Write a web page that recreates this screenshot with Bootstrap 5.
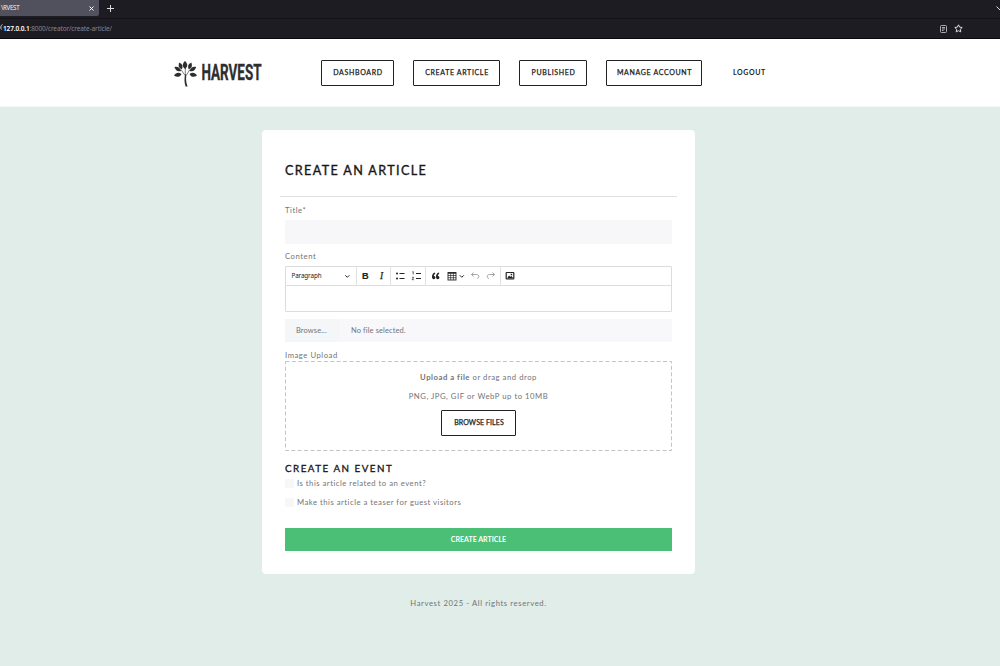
<!DOCTYPE html>
<html lang="en">
<head>
<meta charset="utf-8">
<meta name="viewport" content="width=device-width, initial-scale=1">
<title>Harvest</title>
<link rel="stylesheet" href="https://cdn.jsdelivr.net/npm/bootstrap@5.3.0/dist/css/bootstrap.min.css">
<style>
body{font-family:Lato,"Open Sans",sans-serif;background:#e1ede9;color:#727477;font-size:7.7px;line-height:12px;letter-spacing:.54px;height:666px;overflow:hidden}
svg{display:block;flex:none}
.chrome{font-family:"Noto Sans",sans-serif;letter-spacing:0;background:#1d1c23;height:39px;border-bottom:1px solid #09090c}
.tabs{height:18px}
.tab-on{width:99px;height:16px;background:#50515c;color:#f2f2f4;font-size:6.2px;letter-spacing:-.3px;padding:0 5px 0 1px;border-radius:0 0 2px 0}
.url{height:20px;font-size:6.5px;color:#85858c;padding-left:3px;border-top:1px solid #141319}
.url b{color:#fff;font-weight:600}
.url-text{letter-spacing:-.12px}
.url-icons{margin-right:37px;gap:7px}
.site-head{height:68px;background:#fff;padding-left:173px;border-bottom:1px solid #f4f8f7}
.brand{width:148px;padding-top:20px}
.site-nav{gap:19px;padding-top:21px}
.btn-line{border:1.5px solid #222;border-radius:1px;background:#fff;color:#222;font-weight:400;-webkit-text-stroke:.25px #222;font-size:7px;line-height:11px;height:26px;padding:0 0 1px 1px;display:flex;align-items:center;justify-content:center;letter-spacing:.66px}
.logout{color:#222;font-weight:700;font-size:7px;letter-spacing:.6px;margin-left:12px;height:24px;line-height:24px}
.panel{width:433px;height:444px;margin:23px 0 0 262px;border-radius:4px;padding:34px 23px 0;background:#fff}
h1{font-size:12.6px;line-height:14px;font-weight:400;-webkit-text-stroke:.35px #171717;color:#171717;letter-spacing:1.37px;margin:0 0 18px}
.rule{height:1px;background:#dedfdf;margin:0 -5px 7px}
.lab{height:12px}
.field{height:24px;background:#f7f7f9;border-radius:1px}
.editor{border:1px solid #dcdcdc;height:46px;border-radius:1px;margin-top:4px}
.tools{height:19px;border-bottom:1px solid #dedede;color:#222;font-family:"Noto Sans",sans-serif;font-size:6px;letter-spacing:-.02px}
.file{height:23px;background:#f8f8fa;margin-top:7px;letter-spacing:.1px;font-size:7.5px}
.file-btn{width:55px;padding-left:11px;background:#f5f6f7;height:23px;line-height:23px}
.drop-frame{height:90px}
.drop-copy{padding-top:10px}
.check-box{width:9px;height:9px;background:#f7f7f8;border-radius:1px;margin-right:3px}
h2{font-size:9.8px;line-height:12px;font-weight:400;-webkit-text-stroke:.3px #171717;color:#171717;letter-spacing:1.5px;margin:11px 0 3px}
.checks{letter-spacing:.5px}
.submit{height:23px;background:#4abf75;color:#fff;border:0;font-size:7px;font-weight:700;letter-spacing:.02px;line-height:23px;padding:0;border-radius:0;margin-top:20px;width:100%}
footer{width:433px;margin:23px 0 0 262px;letter-spacing:.6px}
</style>
</head>
<body>
<div class="chrome">
  <div class="tabs d-flex align-items-start">
    <div class="tab-on d-flex align-items-center justify-content-between"><span>\RVEST</span><svg width="5" height="5" viewBox="0 0 5 5" stroke="#fff"><path d="M.5.5l4 4m0-4l-4 4"/></svg></div>
    <svg class="ms-2" style="margin-top:5px" width="7" height="7" viewBox="0 0 7 7" stroke="#ddd"><path d="M3.500 0v7M0 3.500h7"/></svg>
    <svg class="ms-auto" style="margin-top:6px" width="4" height="5" viewBox="0 0 4 5" fill="none" stroke="#ddd"><path d="M.5.5L4 4"/></svg>
  </div>
  <div class="url position-relative d-flex align-items-center justify-content-between">
    <svg class="position-absolute start-0" style="top:5px" width="3" height="7" viewBox="0 0 3 7" fill="none" stroke="#ccc"><path d="M2.500.5C.5 1.500.3 4 1.500 5.500"/></svg>
    <span class="url-text"><b>127.0.0.1</b>:8000/creator/create-article/</span>
    <span class="url-icons d-flex align-items-center">
      <svg width="7" height="8" viewBox="0 0 7 8" fill="none" stroke="#bbb" stroke-width=".9"><rect x=".5" y=".5" width="6" height="7" rx="1"/><path d="M2 2.500h3M2 4h3M2 5.500h1.500"/></svg>
      <svg width="9" height="9" viewBox="0 0 9 9" fill="none" stroke="#ddd" stroke-linejoin="round"><path d="M4.500.8l1.100 2.300 2.600.4-1.900 1.800.5 2.600-2.300-1.200-2.300 1.200.5-2.600L.8 3.500l2.600-.4z"/></svg>
    </span>
  </div>
</div>
<header class="site-head d-flex">
  <div class="brand">
    <svg width="94" height="30" viewBox="0 0 94 30" fill="#2e2e2e">
      <g>
        <path d="M12 2c3 3 3 5.500 0 8-3-2.500-3-5 0-8z"/>
        <path d="M6.300 3.500c3.300 1.700 3.800 3.700 2.600 6.800-3.200-1-3.900-3.400-2.600-6.800z"/>
        <path d="M18.300 3.500c-3.300 1.700-3.800 3.700-2.600 6.800 3.200-1 3.900-3.400 2.600-6.800z"/>
        <path d="M1.400 8c3.300-.7 5.600.8 6.800 4C4.700 13 2.500 11.500 1.400 8z"/>
        <path d="M23.200 8c-3.300-.7-5.600.8-6.800 4 3.500 1 5.700-.5 6.800-4z"/>
        <path d="M1 16.500c2-3.200 4.700-3.500 7.500-1.600-1.600 3.300-4.500 3.600-7.500 1.600z"/>
        <path d="M24 16.500c-2-3.200-4.700-3.500-7.500-1.600 1.600 3.300 4.500 3.600 7.500 1.600z"/>
      </g>
      <path d="M12.300 9v7M8 10.500l4 6M16.800 10.500l-3.500 6" fill="none" stroke="#2e2e2e" stroke-width=".6"/>
      <path d="M12 15.500h1.300c-.5 5-.2 8.500 1.300 12h-2c-1.300-3.500-1.400-7-.6-12z"/>
      <text x="28.500" y="20.700" font-family="Roboto" font-weight="700" font-size="22.500" letter-spacing="0" textLength="60" lengthAdjust="spacingAndGlyphs" stroke="#2e2e2e" stroke-width=".35">HARVEST</text>
    </svg>
  </div>
  <nav class="site-nav d-flex">
    <a class="btn-line text-decoration-none" style="width:73px">DASHBOARD</a>
    <a class="btn-line text-decoration-none" style="width:87px">CREATE ARTICLE</a>
    <a class="btn-line text-decoration-none" style="width:68px">PUBLISHED</a>
    <a class="btn-line text-decoration-none" style="width:96px">MANAGE ACCOUNT</a>
    <a class="logout text-decoration-none">LOGOUT</a>
  </nav>
</header>
<main class="panel">
  <h1>CREATE AN ARTICLE</h1>
  <div class="rule"></div>
  <div class="lab">Title*</div>
  <div class="field" style="margin:4px 0 6px"></div>
  <div class="lab">Content</div>
  <div class="editor">
    <div class="tools">
      <svg width="385" height="18" viewBox="0 0 385 18" fill="none" stroke="#262626">
        <g stroke="#e2e2e2"><path d="M70.500 0v18M104.500 0v18M139.500 0v18M214.500 0v18"/></g>
        <g fill="#222" stroke="none"><text x="5.500" y="11" font-size="6.300" textLength="30">Paragraph</text>
        <text x="76" y="12.300" font-family="Liberation Sans" font-size="9.200" font-weight="700" stroke="#222" stroke-width=".2">B</text>
        <text x="94" y="12.300" font-family="Liberation Serif" font-size="9.500" font-style="italic" stroke="#222" stroke-width=".25">I</text></g>
        <path d="M59.300 8.300l2 2 2-2M173.800 8.300l2 2 2-2"/>
        <path d="M113.500 6.500h5M113.500 11.500h5M130 6.500h5M130 11.500h5"/>
        <g fill="#222" stroke="none"><circle cx="111" cy="6.500" r="1"/><circle cx="111" cy="11.500" r="1"/></g>
        <path stroke-width=".7" d="M126.300 5l.9-.5v3M126 10.300h1.700l-1.500 2.400h1.700"/>
        <g fill="#222" stroke="none"><path d="M149 5.500c-2 .5-3 2.300-3 4.300 0 1.500.6 2.400 1.700 2.400 1 0 1.700-.7 1.700-1.700s-.7-1.600-1.700-1.600c.1-1 .6-1.700 1.500-2.200zM153 5.500c-2 .5-3 2.300-3 4.300 0 1.500.6 2.400 1.700 2.400 1 0 1.700-.7 1.700-1.700s-.7-1.600-1.700-1.600c.1-1 .6-1.700 1.500-2.200z"/></g>
        <rect x="162" y="5.500" width="8" height="7.500" stroke-width=".9"/><path d="M162 6h8" stroke-width="1.400"/><path stroke-width=".7" d="M162 8.500h8M162 10.700h8M164.700 6v7M167.400 6v7"/>
        <g stroke="#999" stroke-width=".9"><path d="M187.500 5.500l-2 2 2 2M185.500 7.500h5c1.500 0 2.300 1 2.300 2s-.8 1.900-1.800 1.900M206.500 5.500l2 2-2 2M208.500 7.500h-5c-1.500 0-2.300 1-2.300 2s.8 1.900 1.800 1.900"/></g>
        <rect x="220.200" y="5.500" width="7.600" height="6.500" rx=".5" stroke-width="1.200"/><path fill="#222" stroke="none" d="M221 11.500l2-3 1.300 1.300L225.500 9l2 2.500zM224.700 6.700h1.500v1.500h-1.500z"/>
      </svg>
    </div>
  </div>
  <div class="file d-flex align-items-center"><span class="file-btn">Browse...</span><span style="margin-left:11px">No file selected.</span></div>
  <div class="lab" style="margin-top:7px">Image Upload</div>
  <div class="drop-frame position-relative text-center">
    <svg class="position-absolute top-0 start-0" width="387" height="90" fill="none" stroke="#c3c3c3" stroke-dasharray="4 2.400"><rect x=".5" y=".5" width="386" height="89"/></svg>
    <div class="drop-copy"><b>Upload a file</b> or drag and drop</div>
    <div style="margin-top:7px">PNG, JPG, GIF or WebP up to 10MB</div>
    <span class="btn-line mx-auto" style="width:75px;margin-top:8px;letter-spacing:.08px">BROWSE FILES</span>
  </div>
  <h2>CREATE AN EVENT</h2>
  <div class="checks">
    <div class="d-flex align-items-center"><span class="check-box"></span>Is this article related to an event?</div>
    <div class="d-flex align-items-center" style="margin-top:7px"><span class="check-box"></span>Make this article a teaser for guest visitors</div>
  </div>
  <button class="submit d-block">CREATE ARTICLE</button>
</main>
<footer class="text-center">Harvest 2025 - All rights reserved.</footer>
<script src="https://cdn.jsdelivr.net/npm/bootstrap@5.3.0/dist/js/bootstrap.bundle.min.js"></script>
</body>
</html>
